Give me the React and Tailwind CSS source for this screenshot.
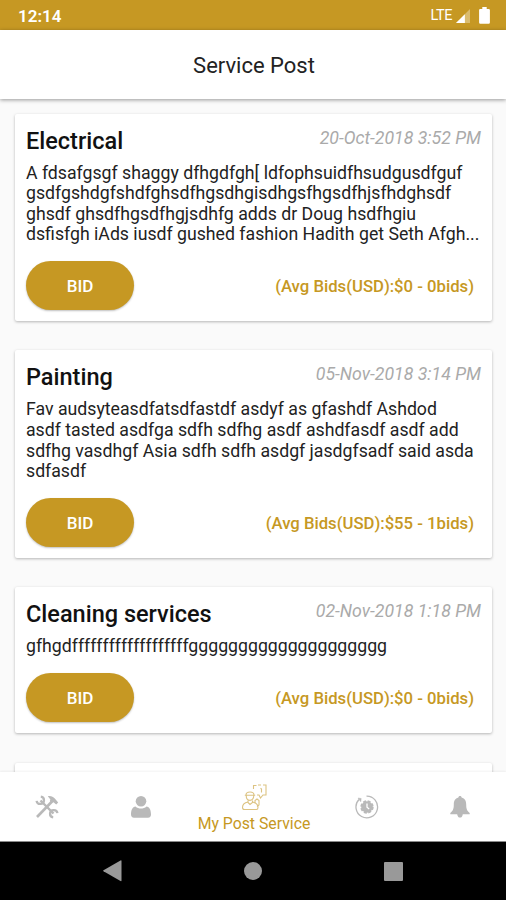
import React from 'react';

const posts = [
  {
    id: 1,
    title: 'Electrical',
    date: '20-Oct-2018 3:52 PM',
    lines: [
      'A fdsafgsgf shaggy dfhgdfgh[ ldfophsuidfhsudgusdfguf',
      'gsdfgshdgfshdfghsdfhgsdhgisdhgsfhgsdfhjsfhdghsdf',
      'ghsdf ghsdfhgsdfhgjsdhfg adds dr Doug hsdfhgiu',
      'dsfisfgh iAds iusdf gushed fashion Hadith get Seth Afgh...',
    ],
    bids: '(Avg Bids(USD):$0 - 0bids)',
  },
  {
    id: 2,
    title: 'Painting',
    date: '05-Nov-2018 3:14 PM',
    lines: [
      'Fav audsyteasdfatsdfastdf asdyf as gfashdf Ashdod',
      'asdf tasted asdfga sdfh sdfhg asdf ashdfasdf asdf add',
      'sdfhg vasdhgf Asia sdfh sdfh asdgf jasdgfsadf said asda',
      'sdfasdf',
    ],
    bids: '(Avg Bids(USD):$55 - 1bids)',
  },
  {
    id: 3,
    title: 'Cleaning services',
    date: '02-Nov-2018 1:18 PM',
    lines: ['gfhgdfffffffffffffffffffgggggggggggggggggggg'],
    bids: '(Avg Bids(USD):$0 - 0bids)',
  },
];

const StatusBar = () => (
  <div className="flex h-[30px] shrink-0 items-center justify-between bg-[#c69823] pl-[18px] pr-[16px] text-white">
    <span className="pt-[2px] text-[17px] font-semibold leading-none">12:14</span>
    <div className="flex items-center">
      <span className="pt-[2px] text-[14.5px] leading-none tracking-[-0.4px]">LTE</span>
      <svg className="ml-[4px] mt-[1px]" width="14" height="14" viewBox="0 0 15 15">
        <path d="M0 15L15 0V15Z" fill="#fff" opacity="0.35" />
        <path d="M0 15L9.500 5.500V15Z" fill="#fff" />
      </svg>
      <svg className="ml-[9px]" width="11" height="17" viewBox="0 0 11 17">
        <path d="M3.3 0h4.4v1.9h2a1.2 1.2 0 0 1 1.2 1.2v12.5a1.2 1.2 0 0 1-1.2 1.2H1.3a1.2 1.2 0 0 1-1.2-1.2V3.1a1.2 1.2 0 0 1 1.2-1.2h2z" fill="#fff" />
      </svg>
    </div>
  </div>
);

const PostCard = ({ post }) => (
  <div className="rounded-[2px] bg-white px-[11px] pb-[11px] shadow-[0_1px_3px_rgba(0,0,0,0.28)]">
    <div className="flex h-[49px] justify-between">
      <h2 className="pt-[13px] text-[23.5px] font-medium leading-[29px] text-[#111]">{post.title}</h2>
      <span className="pt-[12px] text-[17.7px] italic leading-[24px] text-[#aaa]">{post.date}</span>
    </div>
    <div className="text-[17.7px] leading-[20.6px] text-[#222]">
      {post.lines.map((line) => (
        <p key={line} className="whitespace-nowrap">{line}</p>
      ))}
    </div>
    <div className="mt-[16.5px] flex items-center justify-between pr-[7px]">
      <button className="h-[49px] w-[108px] rounded-full bg-[#c69823] pt-[1px] text-[17px] font-medium text-white shadow-[0_1px_2px_rgba(0,0,0,0.25)]">
        BID
      </button>
      <span className="pt-[3px] text-[16.7px] font-medium leading-none text-[#c69823]">{post.bids}</span>
    </div>
  </div>
);

const ToolsIcon = () => (
  <svg width="24" height="24" viewBox="0 0 24 24" fill="none" stroke="#b9b9b9">
    <path d="M5.5 5.5L18.5 18.5" strokeWidth="2.4" />
    <path d="M2 22L17 6.5" strokeWidth="2.6" />
    <path d="M5.8 1.6A3.7 3.7 0 1 1 1.6 5.8" strokeWidth="2.3" />
    <path d="M18.2 22.4A3.7 3.7 0 1 1 22.4 18.2" strokeWidth="2.3" />
    <path d="M12.8 1.2c3-.6 5.2.4 7 2.2l3.4 4.2-2 2-2.7-2.3-1.7.8-2-2 .6-1.6z" fill="#b9b9b9" stroke="none" />
  </svg>
);

const UserIcon = () => (
  <svg width="22" height="22" viewBox="0 0 22 22" fill="#b9b9b9">
    <circle cx="11" cy="5.3" r="5.3" />
    <path d="M5.500 10.5c3 2.700 8 2.700 11 0 3 .5 4.500 3.500 4.500 8 0 2-1 3.200-3 3.200H4c-2 0-3-1.200-3-3.200 0-4.500 1.500-7.500 4.500-8z" />
  </svg>
);

const PostServiceIcon = () => (
  <svg width="27" height="27" viewBox="0 0 27 27" fill="none" stroke="#dcc382" strokeWidth="1.1">
    <path d="M12.500 5V1.500h3M17 1h3M22 1h3v10h-3l-2.500 3-1.500-3h-2" />
    <path d="M19.500 4.200l1 .8v3.500" />
    <path d="M5 11c0-4 8-4 8 0M3.800 11.200h10.400M5.200 11.500c0 6.500 7.600 6.500 7.600 0M7 16.500v2l2 2 2.500-2v-2" />
    <path d="M7 18c-4 .8-5.500 3-5.500 5.500 0 1.500 1 2 2 2h12c1 0 1.500-.5 1.500-2 0-2.500-2-4.700-5.500-5.500" />
    <path d="M14 19v-2.500l2-1.500 2 1.500V21l-2 1.500" />
  </svg>
);

const ClockIcon = () => (
  <svg width="24" height="24" viewBox="0 0 24 24" fill="none" stroke="#b9b9b9">
    <path d="M11.5 1.2A10.8 10.8 0 1 1 4 4.5" strokeWidth="1.3" />
    <path d="M3 3l3.200.5-.4 3.300z" fill="#b9b9b9" strokeWidth="0.5" />
    <circle cx="12" cy="12" r="5.8" fill="#b9b9b9" strokeWidth="1.8" strokeDasharray="3 1.55" />
    <path d="M12 8.5V12.3l2.200 1.700" stroke="#fff" strokeWidth="1.3" />
  </svg>
);

const BellIcon = () => (
  <svg width="20" height="22" viewBox="0 0 20 22" fill="#b9b9b9">
    <path d="M10 0c1 0 1.600.7 1.600 1.600C15 2.500 16.200 5.200 16.200 8.500c0 5 1.200 6.500 3.500 8.500v1.200H.3V17c2.300-2 3.500-3.500 3.500-8.500C3.800 5.200 5 2.500 8.400 1.600 8.400.7 9 0 10 0z" />
    <path d="M7.200 18h5.600c-.2 2.500-1.300 3.600-2.800 3.600S7.400 20.500 7.200 18z" />
  </svg>
);

const BottomNav = () => (
  <nav className="z-10 flex h-[70px] shrink-0 items-center border-b border-[#8a8a8a] bg-white shadow-[0_-1px_2px_rgba(0,0,0,0.05)]">
    <div className="flex w-[94px] justify-center"><ToolsIcon /></div>
    <div className="flex w-[94px] justify-center"><UserIcon /></div>
    <div className="flex w-[132px] flex-col items-center pt-[5px]">
      <PostServiceIcon />
      <span className="mt-[3px] whitespace-nowrap text-[15.8px] leading-[20px] text-[#c69823]">My Post Service</span>
    </div>
    <div className="flex w-[94px] justify-center"><ClockIcon /></div>
    <div className="flex w-[92px] justify-center"><BellIcon /></div>
  </nav>
);

const SystemNav = () => (
  <div className="flex h-[58px] shrink-0 items-center justify-between bg-black pl-[103px] pr-[103px]">
    <svg width="19" height="22" viewBox="0 0 19 22" fill="#999">
      <path d="M.5 10.200L17.500.4Q18.500 0 18.500 1v19.500q0 1-1 .5L.5 11.200q-.7-.5 0-1z" />
    </svg>
    <div className="h-[18px] w-[18px] rounded-full bg-[#999]" />
    <div className="h-[19px] w-[19px] rounded-[1px] bg-[#999]" />
  </div>
);

const App = () => {
  return (
    <div className="flex h-[900px] w-[506px] flex-col overflow-hidden bg-[#fafafa] font-['Roboto',sans-serif]">
      <StatusBar />
      <header className="z-10 flex h-[69px] shrink-0 items-center justify-center bg-white pt-[2px] pl-[2px] shadow-[0_1px_4px_rgba(0,0,0,0.4)]">
        <h1 className="text-[22px] leading-none text-[#222]">Service Post</h1>
      </header>
      <main className="flex min-h-0 flex-1 flex-col gap-[29px] overflow-hidden pl-[15px] pr-[14px] pt-[14.5px]">
        {posts.map((post) => (
          <PostCard key={post.id} post={post} />
        ))}
        <div className="mt-[1px] h-[60px] shrink-0 rounded-[2px] bg-white shadow-[0_1px_3px_rgba(0,0,0,0.28)]" />
      </main>
      <BottomNav />
      <SystemNav />
    </div>
  );
};

export default App;
